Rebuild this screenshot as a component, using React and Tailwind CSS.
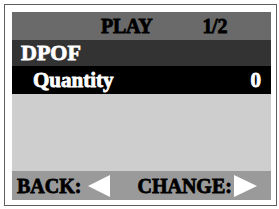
export default function App() {
  return (
    <div className="w-[279px] h-[209px] bg-white pt-[4px] pl-[4px] font-['Liberation_Serif','Times_New_Roman',serif] font-bold [-webkit-text-stroke:0.8px]">
      <div className="w-[273px] h-[202px] border border-[#5e5e5e] pt-[7px] pl-[7px] pr-[5px] pb-[5px]">
        <div className="flex flex-col h-full">
          {/* header */}
          <div className="h-[28px] bg-[#6a6a6a] flex items-center text-black text-[20px] leading-none tracking-[-0.3px]">
            <span className="ml-[89px]">PLAY</span>
            <span className="ml-[50px]">1/2</span>
          </div>

          {/* DPOF */}
          <div className="h-[26px] bg-[#333333] flex items-center pl-[9px] text-white text-[22px] leading-none">
            DPOF
          </div>

          {/* Quantity */}
          <div className="h-[28px] bg-black flex items-center justify-between pl-[21px] pr-[10px] text-white text-[21px] leading-none">
            <span>Quantity</span>
            <span>0</span>
          </div>

          <div className="flex-1 bg-[#cecece]" />

          {/* footer */}
          <div className="h-[29px] bg-[#9a9a9a] flex items-center text-black text-[20px] leading-none">
            <span className="ml-[5px]">BACK:</span>
            <svg className="ml-[7px]" width="22" height="22" viewBox="0 0 22 22">
              <polygon points="0,11 22,0 22,22" fill="white" />
            </svg>
            <span className="ml-[27px]">CHANGE:</span>
            <svg className="ml-[2px]" width="23" height="22" viewBox="0 0 23 22">
              <polygon points="0,0 23,11 0,22" fill="white" />
            </svg>
          </div>
        </div>
      </div>
    </div>
  );
}
